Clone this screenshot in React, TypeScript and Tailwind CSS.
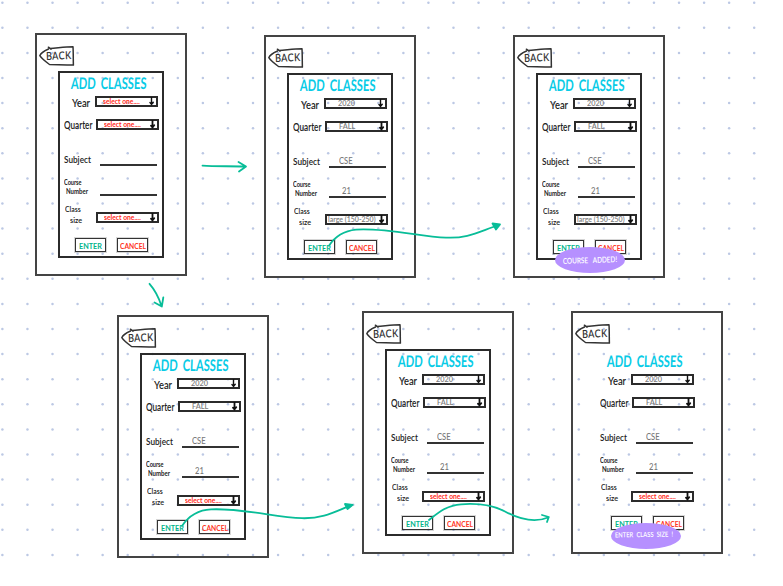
import React from "react";
import clsx from "clsx";

type Screen = {
  frame: string;
  year?: string;
  quarter?: string;
  subject?: string;
  number?: string;
  size?: string;
  sizeShift?: boolean;
  borderless?: boolean;
  toast?: { text: string; place: string; ink: string };
};

const filled = { year: "2020", quarter: "FALL", subject: "CSE", number: "21" };

const screens: Screen[] = [
  { frame: "left-[35px] top-[33px]" },
  { frame: "left-[264px] top-[35px]", ...filled, size: "large (150-250)" },
  {
    frame: "left-[513px] top-[35px]",
    ...filled,
    size: "large (150-250)",
    toast: { text: "COURSE ADDED!", place: "left-[40px] top-[210px]", ink: "scale-x-[0.8] -rotate-2 text-[8px] [word-spacing:4px]" },
  },
  { frame: "left-[117px] top-[315px]", ...filled, sizeShift: true },
  { frame: "left-[362px] top-[311px]", ...filled, sizeShift: true },
  {
    frame: "left-[571px] top-[311px]",
    ...filled,
    sizeShift: true,
    borderless: true,
    toast: { text: "ENTER CLASS SIZE !", place: "left-[38px] top-[210px]", ink: "scale-x-[0.83] -translate-x-0.5 -translate-y-0.5 -rotate-1 text-[7px] [word-spacing:2px]" },
  },
];

function Back() {
  return (
    <div className="relative ml-0.5 mt-[11px] flex h-5 w-9 shrink-0 items-center">
      <svg className="absolute inset-0" width="36" height="20" viewBox="0 0 36 20" fill="none" stroke="#333" strokeWidth="1.5" strokeLinecap="round" strokeLinejoin="round">
        <path d="M9.4 1.2 L12 3.2 M11 2.4 C18 2 26 .9 34 .8 C34.4 7 34.2 14 34.4 19.1 C26 18.4 18 18.8 10.5 18.5 C7 16 3 13 .8 9.7 C2 6.5 6 4.6 9.5 3" />
      </svg>
      <span className="relative -mt-0.5 ml-[7px] origin-left scale-x-[0.82] -rotate-2 text-[11px] font-semibold leading-none tracking-[0.5px] text-[#333]">BACK</span>
    </div>
  );
}

function Select({ value, wide, heavy }: { value?: string; wide?: boolean; heavy?: boolean }) {
  return (
    <div className="flex h-[11px] w-[63px] shrink-0 items-center justify-between border-2 border-[#2b2b2b]">
      {value ? (
        <span
          className={clsx(
            "origin-left whitespace-nowrap text-[7px] font-semibold leading-[7px] text-[#808080]",
            wide ? "ml-px w-[48px] scale-x-100" : "ml-[12px] w-[20px] scale-x-105",
          )}
        >
          {value}
        </span>
      ) : (
        <span className="-mt-px ml-[6px] w-[40px] origin-left scale-x-[0.96] whitespace-nowrap text-[7px] font-bold leading-[7px] text-[#ff2a1a]">select one....</span>
      )}
      <svg className="shrink-0" width="8" height="9" viewBox="0 0 8 9" fill="none" stroke="#111" strokeWidth={heavy ? 1.8 : 1.4} strokeLinecap="round">
        <path d="M3.5 .5V7.2M2 5.6L3.5 7.4L5.2 5.2" />
      </svg>
    </div>
  );
}

function Line({ value, pad }: { value?: string; pad: string }) {
  return (
    <div className={clsx("flex h-[13px] w-[57px] items-start self-end border-b-2 border-[#333]", pad)}>
      <span className="origin-left scale-x-[0.85] text-[9px] font-medium leading-[11px] text-[#777]">{value}</span>
    </div>
  );
}

function Artboard({ s }: { s: Screen }) {
  return (
    <section className={clsx("absolute flex h-[243px] w-[152px] flex-col border-2 border-[#444]", s.frame)}>
      <Back />
      <div className={clsx("ml-[21px] mt-[5px] flex h-[187px] w-[106px] shrink-0 flex-col border-2", s.borderless ? "border-transparent" : "border-[#2b2b2b]")}>
        <h1 className="flex h-[21px] items-center pl-[11px]">
          <span className="-mt-0.5 origin-left scale-x-[0.7] -skew-x-3 whitespace-nowrap text-[16px] font-bold leading-none text-[#08cbe6] [word-spacing:3px]">ADD CLASSES</span>
        </h1>
        <div className="mt-0.5 flex h-[11px] items-center">
          <span className="w-[35px] shrink-0 pl-[12px]">
            <span className="block origin-left translate-y-px scale-x-[0.78] text-[12px] font-semibold leading-none">Year</span>
          </span>
          <Select value={s.year} />
        </div>
        <div className="mt-3 flex h-[11px] items-center">
          <span className="w-9 shrink-0 pl-1">
            <span className="block origin-left scale-x-[0.74] text-[11px] font-semibold leading-none">Quarter</span>
          </span>
          <Select value={s.quarter} heavy />
        </div>
        <div className="mt-6 flex h-[12px] items-center">
          <span className="w-10 shrink-0 pl-1">
            <span className="block origin-left -translate-y-px scale-x-[0.82] text-[10px] font-semibold leading-none">Subject</span>
          </span>
          <Line value={s.subject} pad="pl-[10px]" />
        </div>
        <div className="mt-3 flex h-[18px]">
          <div className="w-10 shrink-0 pl-1 text-[7px] font-bold leading-[9px]">
            <span className="block origin-left scale-x-[0.8]">Course</span>
            <span className="ml-0.5 block origin-left scale-x-[0.86]">Number</span>
          </div>
          <Line value={s.number} pad="pl-[13px]" />
        </div>
        <div className="mt-[9px] flex h-[21px]">
          <div className={clsx("shrink-0 pl-[5px] text-[8px] font-semibold", s.sizeShift ? "w-[35px]" : "w-9")}>
            <span className="block origin-left scale-x-[0.86] leading-[9px]">Class</span>
            <span className="ml-[5px] block origin-left scale-x-[0.9] leading-[13px]">size</span>
          </div>
          <div className={s.sizeShift ? "mt-2" : "mt-[7px]"}>
            <Select value={s.size} wide heavy />
          </div>
        </div>
        <div className="ml-[15px] mt-[12px] flex gap-[11px] text-[8px] font-bold leading-none">
          <button className="flex h-[14px] w-[31px] items-center border border-[#333] pl-[3px] pt-px text-[#00b48a] outline outline-[#33333333]">
            <span className="origin-left scale-x-[0.9]">ENTER</span>
          </button>
          <button className="flex h-[14px] w-[31px] items-center border border-[#333] pl-[2px] pt-px text-[#ff3324] outline outline-[#33333333]">
            <span className="origin-left scale-x-[0.84]">CANCEL</span>
          </button>
        </div>
      </div>
      {s.toast && (
        <div className={clsx("absolute flex h-[26px] w-[70px] items-center justify-center rounded-[50%] bg-[#b690ff]", s.toast.place)}>
          <span className={clsx("whitespace-nowrap font-semibold leading-none text-white", s.toast.ink)}>{s.toast.text}</span>
        </div>
      )}
    </section>
  );
}

const columns = Array.from({ length: 31 }, (_, i) => 2.4 + i * 25.06);
const rows = Array.from({ length: 23 }, (_, i) => 2.7 + i * 25.1);

export default function App() {
  return (
    <main className="relative h-[586px] w-[783px] overflow-hidden bg-white font-[Lato,sans-serif] text-[#222]">
      <svg className="absolute inset-0" width="783" height="586" fill="#bcc8e4">
        {rows.map((y) => columns.map((x) => <circle key={`${x}-${y}`} cx={x} cy={y} r="1.25" />))}
      </svg>
      {screens.map((s) => (
        <Artboard key={s.frame} s={s} />
      ))}
      <svg className="absolute inset-0" width="783" height="586" fill="none" stroke="#08bd98" strokeWidth="1.8" strokeLinecap="round" strokeLinejoin="round">
        <path d="M202.5 165.6C215 166.6 230 166 245.5 166.6M238.5 162L246 166.6L239 171.5" />
        <path d="M149.5 283.8C155 290 159 298 161.5 306M154.5 302.5L161.8 306.5L163.3 297.5" />
        <path d="M329 245.7C334 238 342 231 356 229.6C385 227.5 420 236.5 446 237.6C468 238.8 480 231 499 225" />
        <path d="M492.5 223.5L500 224.5L496 229.5Z" fill="#08bd98" />
        <path d="M182 526C188 517 197 510 211 509.4C240 507.8 275 517 302 518.2C324 518.8 336 511 351 505.3" />
        <path d="M345 504L352.7 504.8L347.5 509Z" fill="#08bd98" />
        <path d="M429 520C438 513 447 505 461 504.3C475 503.3 491 504 505 511.5C519 519 534 523.5 548 517.5M542 515L548.8 517L547 522" />
      </svg>
    </main>
  );
}
